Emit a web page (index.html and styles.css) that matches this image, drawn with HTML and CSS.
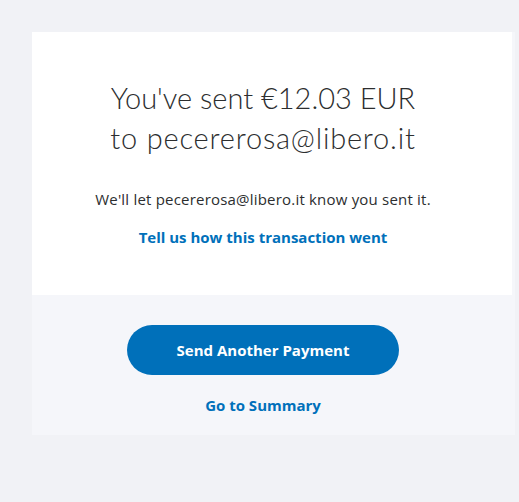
FILE: index.html
```html
<!DOCTYPE html>
<html lang="en">
<head>
<meta charset="utf-8">
<title>Payment sent</title>
<link rel="stylesheet" href="styles.css">
</head>
<body>
<main class="wrap">
  <section class="card">
    <h1 class="title"><span class="title-1">You've sent €12.03 EUR</span><span class="title-2">to pecererosa@libero.it</span></h1>
    <p class="note">We'll let pecererosa@libero.it know you sent it.</p>
    <a class="feedback" href="#">Tell us how this transaction went</a>
  </section>
  <section class="actions">
    <a class="btn" href="#">Send Another Payment</a>
    <a class="summary" href="#">Go to Summary</a>
  </section>
</main>
</body>
</html>
```

FILE: styles.css
```css
html, body {
  margin: 0;
  padding: 0;
}
body {
  background: #f1f2f6;
  font-family: "Open Sans", Lato, sans-serif;
  color: #2c2e2f;
  height: 502px;
  overflow: hidden;
}
.wrap {
  margin: 32px 0 0 32px;
  width: 483px;
  background: #f5f6fa;
}
.card {
  width: 480px;
  height: 263px;
  box-sizing: border-box;
  background: #fff;
  display: flex;
  flex-direction: column;
  align-items: center;
  padding: 46px 18px 0 0;
}
.title {
  margin: 0;
  font-family: Lato, "Open Sans", sans-serif;
  font-weight: 300;
  font-size: 29px;
  line-height: 40px;
  text-align: center;
  color: #2c2e2f;
  display: flex;
  flex-direction: column;
  align-items: center;
}
.title-2 {
  letter-spacing: 0.8px;
}
.note {
  margin: 31px 0 0;
  font-size: 15px;
  line-height: 20px;
  letter-spacing: 0.2px;
}
.feedback {
  margin-top: 18px;
  font-size: 15px;
  font-weight: 700;
  line-height: 20px;
  color: #0070ba;
  text-decoration: none;
}
.actions {
  width: 480px;
  height: 140px;
  box-sizing: border-box;
  padding: 30px 18px 0 0;
  display: flex;
  flex-direction: column;
  align-items: center;
}
.btn {
  width: 272px;
  height: 50px;
  border-radius: 25px;
  background: #0070ba;
  color: #fff;
  font-weight: 700;
  font-size: 15px;
  display: flex;
  align-items: center;
  justify-content: center;
  text-decoration: none;
}
.summary {
  margin-top: 20px;
  font-size: 15px;
  font-weight: 700;
  line-height: 20px;
  color: #0070ba;
  text-decoration: none;
}
```
